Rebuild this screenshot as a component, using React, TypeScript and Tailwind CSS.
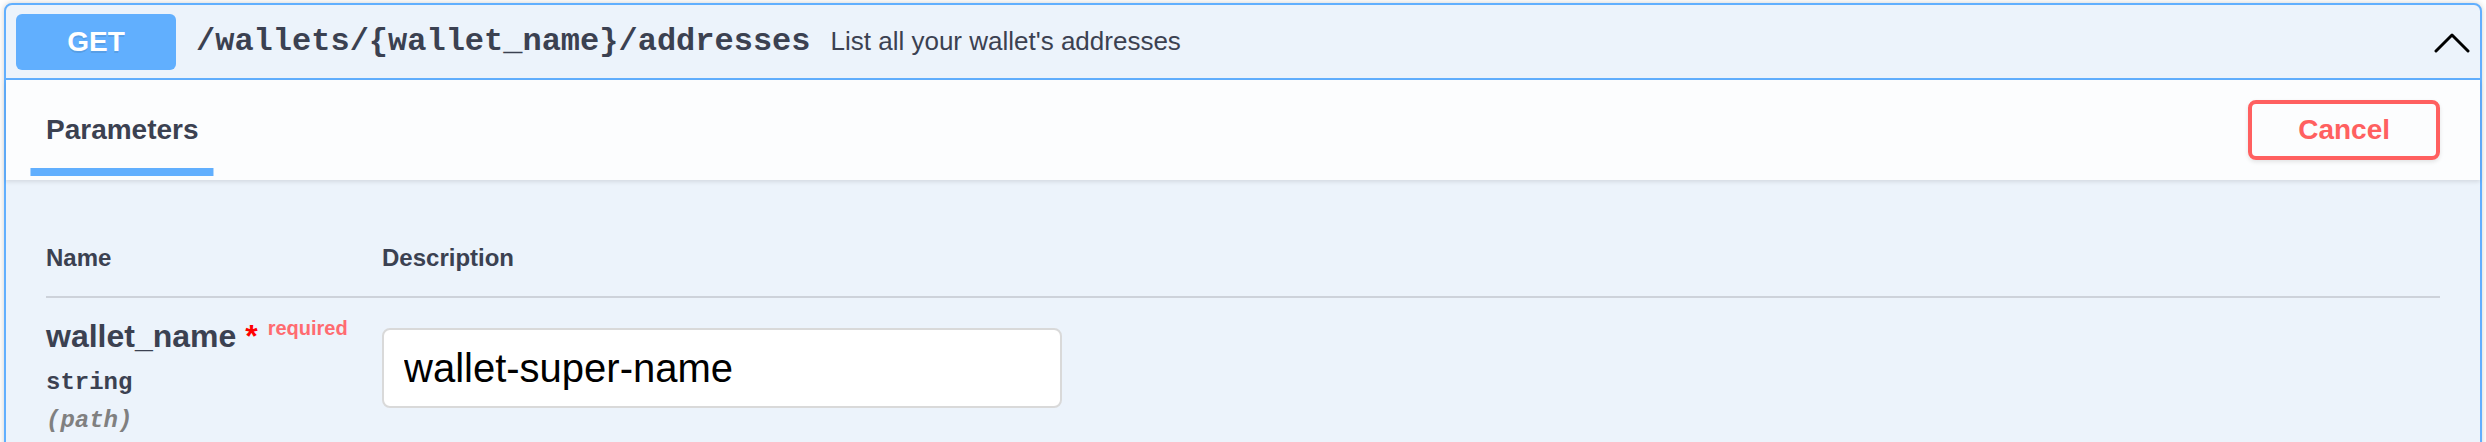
import React from 'react';

const sans = "font-['Liberation_Sans','Helvetica',Arial,sans-serif]";
const mono = "font-['Liberation_Mono','Courier_New',monospace]";

function ChevronUp() {
  return (
    <svg width="36" height="22" viewBox="0 0 36 22" className="shrink-0">
      <polyline
        points="2,20 18,4 34,20"
        fill="none"
        stroke="#000"
        strokeWidth="3"
        strokeLinecap="round"
        strokeLinejoin="round"
      />
    </svg>
  );
}

function Summary() {
  return (
    <div className="flex items-center h-[75px] px-[10px] border-b-2 border-[#61affe]">
      <span
        className={`${sans} w-[160px] h-[56px] shrink-0 rounded-[6px] bg-[#61affe] text-white font-bold text-[28px] flex items-center justify-center [text-shadow:0_2px_0_rgba(0,0,0,0.1)]`}
      >
        GET
      </span>
      <span className={`${mono} px-[20px] text-[32px] font-bold text-[#3b4151]`}>
        /wallets/{'{'}wallet_name{'}'}/addresses
      </span>
      <span className={`${sans} flex-1 text-[26px] text-[#3b4151]`}>
        List all your wallet's addresses
      </span>
      <ChevronUp />
    </div>
  );
}

function SectionHeader() {
  return (
    <div className="flex items-center justify-between h-[100px] px-[40px] bg-[#fcfdfe] shadow-[0_2px_4px_rgba(0,0,0,0.1)]">
      <h4 className={`${sans} text-[28px] font-bold text-[#3b4151]`}>
        <span className="relative inline-block leading-[32px]">
          Parameters
          <span className="absolute left-1/2 -translate-x-1/2 -bottom-[30px] h-[8px] w-[120%] bg-[#61affe]" />
        </span>
      </h4>
      <button
        className={`${sans} h-[60px] px-[46px] border-4 border-[#ff6060] rounded-[8px] bg-transparent text-[#ff6060] text-[28px] font-bold shadow-[0_2px_4px_rgba(0,0,0,0.1)]`}
      >
        Cancel
      </button>
    </div>
  );
}

function ParametersTable() {
  return (
    <div className="p-[40px]">
      <div className={`${sans} grid grid-cols-[336px_1fr] border-b-2 border-[#cdd2da] py-[24px] text-[24px] leading-[28px] font-bold text-[#3b4151]`}>
        <div>Name</div>
        <div>Description</div>
      </div>
      <div className="grid grid-cols-[336px_1fr] pt-[20px]">
        <div>
          <div className={`${sans} text-[32px] leading-[37px] font-bold text-[#3b4151] whitespace-nowrap`}>
            wallet_name
            <span className="text-[#ff0000]">&nbsp;*</span>
            <span className="relative -top-[12px] px-[10px] text-[20px] text-[#ff6b70]">required</span>
          </div>
          <div className={`${mono} py-[10px] text-[24px] leading-[28px] font-bold text-[#3b4151]`}>string</div>
          <div className={`${mono} text-[24px] leading-[28px] font-bold italic text-[#808080]`}>(path)</div>
        </div>
        <div>
          <input
            type="text"
            defaultValue="wallet-super-name"
            className={`${sans} mt-[10px] w-[680px] h-[80px] px-[20px] border-2 border-[#d9d9d9] rounded-[8px] bg-white text-[40px] text-black outline-none`}
          />
        </div>
      </div>
    </div>
  );
}

export default function App() {
  return (
    <div className="w-[2486px] h-[442px] overflow-hidden bg-white pt-[3px] pl-[4px]">
      <div className="w-[2478px] border-2 border-[#61affe] rounded-[8px] bg-[#ecf3fb] shadow-[0_0_6px_rgba(0,0,0,0.19)]">
        <Summary />
        <SectionHeader />
        <ParametersTable />
      </div>
    </div>
  );
}
